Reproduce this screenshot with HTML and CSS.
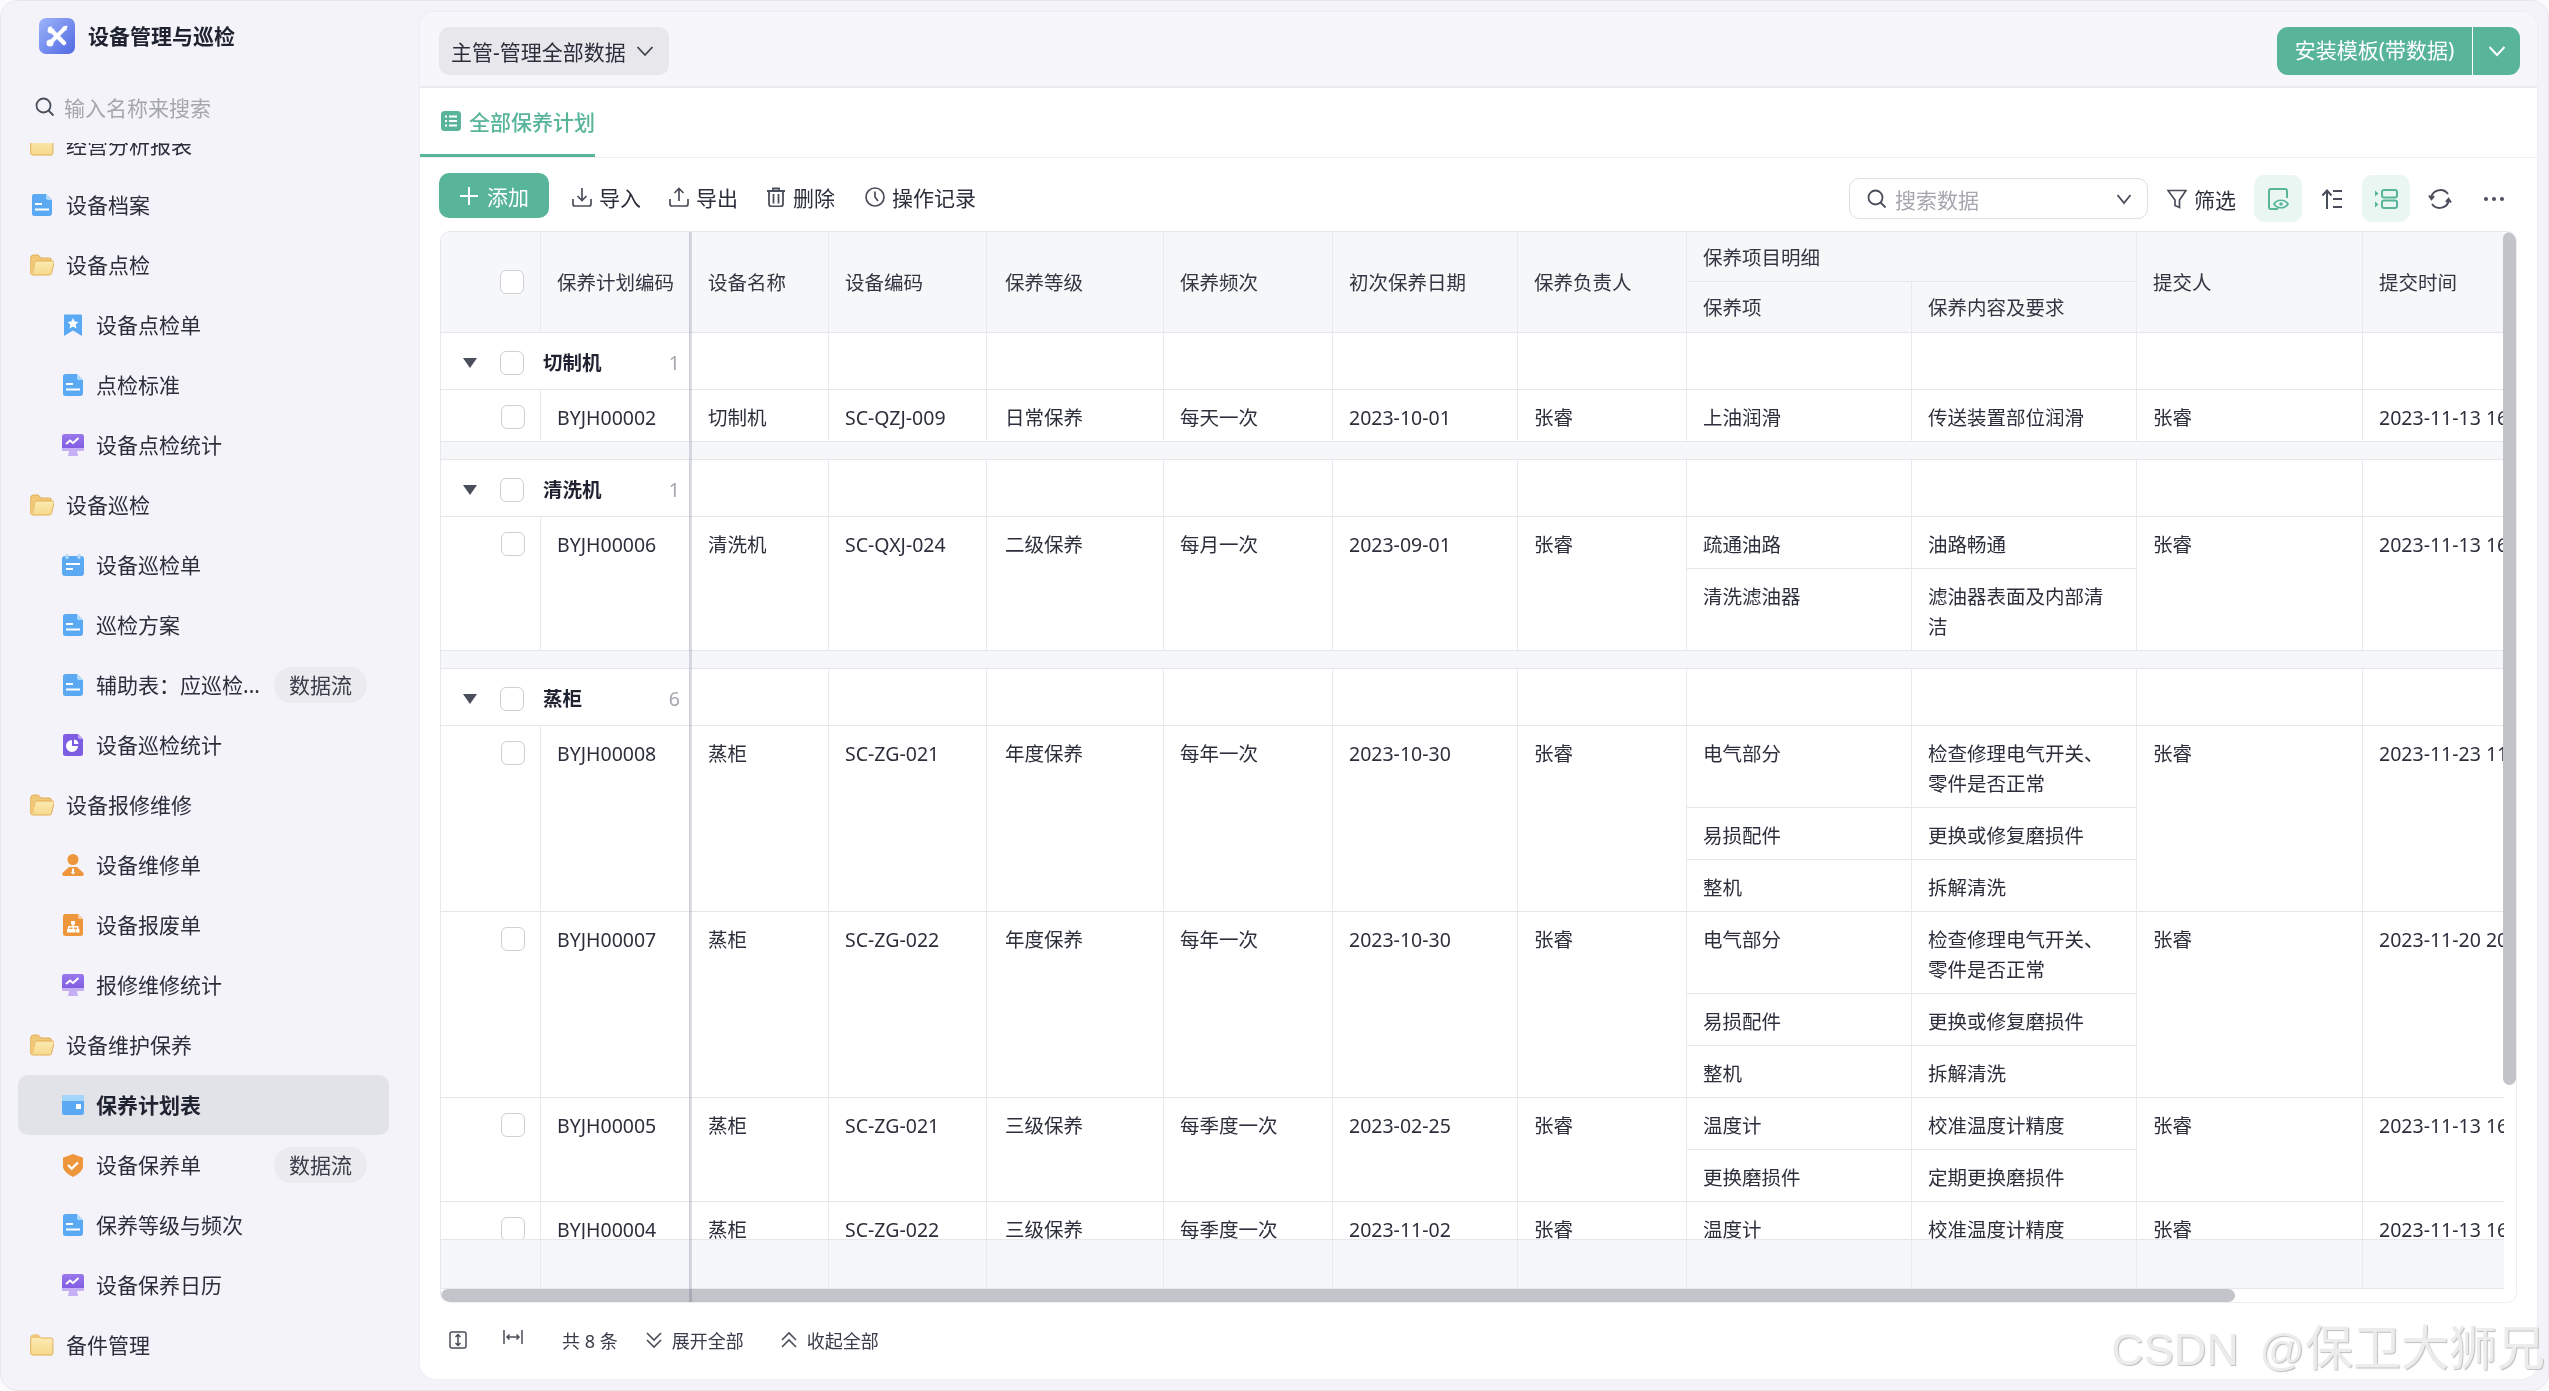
FILE: index.html
```html
<!DOCTYPE html>
<html lang="zh-CN">
<head>
<meta charset="utf-8">
<title>设备管理与巡检</title>
<link rel="stylesheet" href="styles.css">
</head>
<body>
<svg class="defs" width="0" height="0" aria-hidden="true">
  <defs>
    <linearGradient id="gLogo" x1="0" y1="0" x2="1" y2="1"><stop offset="0" stop-color="#9db4fa"/><stop offset="1" stop-color="#5069e2"/></linearGradient>
    <linearGradient id="gFold" x1="0" y1="0" x2="0" y2="1"><stop offset="0" stop-color="#fdeeb9"/><stop offset="1" stop-color="#f6d98c"/></linearGradient>
    <linearGradient id="gPurple" x1="0" y1="0" x2="0" y2="1"><stop offset="0" stop-color="#9a78ec"/><stop offset="1" stop-color="#7b58e0"/></linearGradient>
    <symbol id="i-doc" viewBox="0 0 24 24"><path d="M4.5 1H16l6 6v13a3 3 0 0 1-3 3H4.500a2.500 2.500 0 0 1-2.500-2.500v-17A2.500 2.500 0 0 1 4.500 1z" fill="#5ba9f3"/><path d="M16 1l6 6h-4a2 2 0 0 1-2-2z" fill="#b5dbfb"/><rect x="5" y="10" width="7" height="2" fill="#fff"/><rect x="5" y="15.500" width="14" height="2" fill="#fff"/></symbol>
    <symbol id="i-open" viewBox="0 0 24 24"><path d="M.7 5a3 3 0 0 1 3-3h4.600l2.600 3h8.400a2 2 0 0 1 2 2v2H.7z" fill="#f1c878" stroke="#e3ae57"/><path d="M.7 5v15a2 2 0 0 0 2 2h16.800a2 2 0 0 0 2-1.500L24 10a1.500 1.500 0 0 0-1.500-2H7a2 2 0 0 0-2 1.500L2.500 20" fill="url(#gFold)" stroke="#e3ae57"/><path d="M.7 5v15a2 2 0 0 0 1.800 2L5 10a2 2 0 0 1 2-2V5z" fill="#f1c878"/></symbol>
    <symbol id="i-closed" viewBox="0 0 24 24"><path d="M.7 5a3 3 0 0 1 3-3h4.600l2.600 3h10a2 2 0 0 1 2 2v13a2 2 0 0 1-2 2H2.700a2 2 0 0 1-2-2z" fill="url(#gFold)" stroke="#e3ae57"/><path d="M1 5a3 3 0 0 1 3-3h4.200l2.600 3z" fill="#f1c878"/></symbol>
    <symbol id="i-mark" viewBox="0 0 24 24"><path d="M4 1.500h16a1 1 0 0 1 1 1V23l-9-5.500L3 23V2.500a1 1 0 0 1 1-1z" fill="#5ba9f3"/><path d="M12 5l1.700 3.500 3.800.5-2.800 2.600.7 3.800-3.400-1.800-3.400 1.800.7-3.800L6.500 9l3.800-.5z" fill="#fff"/></symbol>
    <symbol id="i-mon" viewBox="0 0 24 24"><rect x="1" y="1" width="22" height="17" rx="2.500" fill="url(#gPurple)"/><path d="M1 15h22v1a2 2 0 0 1-2 2H3a2 2 0 0 1-2-2z" fill="#c5b0f6"/><path d="M8 18h8l1 5H7z" fill="#c5b0f6"/><path d="M5 11l4-3.500 3 2.500 5.500-5" fill="none" stroke="#fff" stroke-width="2"/></symbol>
    <symbol id="i-cal" viewBox="0 0 24 24"><rect x="1" y="3" width="22" height="20" rx="3" fill="#5ba9f3"/><rect x="4.500" y="1" width="3" height="5" rx="1" fill="#b5dbfb"/><rect x="16.500" y="1" width="3" height="5" rx="1" fill="#b5dbfb"/><rect x="5" y="10" width="14" height="2" fill="#fff"/><rect x="5" y="15" width="7" height="2" fill="#fff"/></symbol>
    <symbol id="i-pie" viewBox="0 0 24 24"><path d="M4.500 1H17l5 5v14.500a2.500 2.500 0 0 1-2.500 2.500h-15A2.500 2.500 0 0 1 2 20.500v-17A2.500 2.500 0 0 1 4.500 1z" fill="#7d5ee3"/><path d="M17 1l5 5h-3a2 2 0 0 1-2-2z" fill="#bfa9f6"/><path d="M11 7a6 6 0 1 0 6 6h-6z" fill="#fff"/><path d="M13 6.500a5 5 0 0 1 4.500 4.500H13z" fill="#fff"/></symbol>
    <symbol id="i-user" viewBox="0 0 24 24"><circle cx="12" cy="6.500" r="5.500" fill="#ee963b"/><path d="M8 14h8l6 5.500c1 1 1 3.500-1 3.500H3c-2 0-2-2.500-1-3.500z" fill="#ee963b"/><path d="M11 15.500h2v3l1 1-2 2-2-2 1-1z" fill="#fff"/></symbol>
    <symbol id="i-org" viewBox="0 0 24 24"><path d="M4.500 1H17l5 5v14.500a2.500 2.500 0 0 1-2.500 2.500h-15A2.500 2.500 0 0 1 2 20.500v-17A2.500 2.500 0 0 1 4.500 1z" fill="#ee963b"/><path d="M17 1l5 5h-3a2 2 0 0 1-2-2z" fill="#f8cf9c"/><path d="M10 8h4v3.500h-1.200v1.500h4.700v3h1v3.500h-4V16h1.500v-1.500h-3V16H14v3.500h-4V16h1.500v-1.500h-3V16H10v3.500H6V16h1v-3h4.200v-1.500H10z" fill="#fff"/></symbol>
    <symbol id="i-card" viewBox="0 0 24 24"><rect x="1" y="2" width="22" height="20" rx="2.500" fill="#5ba9f3"/><path d="M1 8V4.500A2.500 2.500 0 0 1 3.500 2h17A2.500 2.500 0 0 1 23 4.500V8z" fill="#a4d5fa"/><rect x="15" y="11" width="5" height="5" fill="#fff"/></symbol>
    <symbol id="i-shield" viewBox="0 0 24 24"><path d="M12 1l9.500 3.500a1 1 0 0 1 .5.800v8c0 5-6 8.700-10 10.700-4-2-10-5.700-10-10.700v-8a1 1 0 0 1 .5-.8z" fill="#ee963b"/><path d="M7 12l3.700 3.500L17 9.500" fill="none" stroke="#fff" stroke-width="2.400"/></symbol>
  </defs>
</svg>
<div class="shell">
  <aside class="side">
    <div class="brand">
      <span class="logo"><svg viewBox="0 0 36 36" width="36" height="36"><rect width="36" height="36" rx="7" fill="url(#gLogo)"/><path d="M11 11l14 14" stroke="#fff" stroke-width="4.500" stroke-linecap="round"/><path d="M25 11L11 25" stroke="#fff" stroke-width="4" stroke-linecap="round"/><path d="M8.500 13.500a5 5 0 0 1 5-5l-2.500 3 1.500 1.500 3-2.500a5 5 0 0 1-5 5z" fill="#fff"/><path d="M23 9l4.500-1.500 1 1L27 13z" fill="#fff"/><circle cx="11" cy="25" r="3.500" fill="#fff"/></svg></span>
      <span class="brand-name">设备管理与巡检</span>
    </div>
    <div class="side-search">
      <svg class="ic20" viewBox="0 0 20 20" fill="none" stroke="#4a4e5a" stroke-width="1.800"><circle cx="8.500" cy="8.500" r="7"/><path d="M13.500 13.500l5 5"/></svg>
      <span>输入名称来搜索</span>
    </div>
    <nav class="nav">
      <ul class="nav-list">
        <li class="item"><svg class="ni"><use href="#i-closed"/></svg><span class="name">经营分析报表</span></li>
        <li class="item"><svg class="ni"><use href="#i-doc"/></svg><span class="name">设备档案</span></li>
        <li class="item"><svg class="ni"><use href="#i-open"/></svg><span class="name">设备点检</span></li>
        <li class="item sub"><svg class="ni"><use href="#i-mark"/></svg><span class="name">设备点检单</span></li>
        <li class="item sub"><svg class="ni"><use href="#i-doc"/></svg><span class="name">点检标准</span></li>
        <li class="item sub"><svg class="ni"><use href="#i-mon"/></svg><span class="name">设备点检统计</span></li>
        <li class="item"><svg class="ni"><use href="#i-open"/></svg><span class="name">设备巡检</span></li>
        <li class="item sub"><svg class="ni"><use href="#i-cal"/></svg><span class="name">设备巡检单</span></li>
        <li class="item sub"><svg class="ni"><use href="#i-doc"/></svg><span class="name">巡检方案</span></li>
        <li class="item sub"><svg class="ni"><use href="#i-doc"/></svg><span class="name">辅助表：应巡检...</span><span class="badge">数据流</span></li>
        <li class="item sub"><svg class="ni"><use href="#i-pie"/></svg><span class="name">设备巡检统计</span></li>
        <li class="item"><svg class="ni"><use href="#i-open"/></svg><span class="name">设备报修维修</span></li>
        <li class="item sub"><svg class="ni"><use href="#i-user"/></svg><span class="name">设备维修单</span></li>
        <li class="item sub"><svg class="ni"><use href="#i-org"/></svg><span class="name">设备报废单</span></li>
        <li class="item sub"><svg class="ni"><use href="#i-mon"/></svg><span class="name">报修维修统计</span></li>
        <li class="item"><svg class="ni"><use href="#i-open"/></svg><span class="name">设备维护保养</span></li>
        <li class="item sub active"><svg class="ni"><use href="#i-card"/></svg><span class="name">保养计划表</span></li>
        <li class="item sub"><svg class="ni"><use href="#i-shield"/></svg><span class="name">设备保养单</span><span class="badge">数据流</span></li>
        <li class="item sub"><svg class="ni"><use href="#i-doc"/></svg><span class="name">保养等级与频次</span></li>
        <li class="item sub"><svg class="ni"><use href="#i-mon"/></svg><span class="name">设备保养日历</span></li>
        <li class="item"><svg class="ni"><use href="#i-closed"/></svg><span class="name">备件管理</span></li>
      </ul>
    </nav>
  </aside>
  <main class="main">
    <header class="topbar">
      <div class="scope"><span>主管-管理全部数据</span><svg class="chev" viewBox="0 0 18 12" fill="none" stroke="#3f4350" stroke-width="1.800"><path d="M1.500 2l7.500 8 7.500-8"/></svg></div>
      <div class="install"><span class="install-main">安装模板(带数据)</span><span class="install-more"><svg class="chev" viewBox="0 0 18 12" fill="none" stroke="#fff" stroke-width="2"><path d="M1.500 2l7.500 8 7.500-8"/></svg></span></div>
    </header>
    <div class="tabs">
      <div class="tab">
        <svg class="ic20" viewBox="0 0 20 20"><rect width="20" height="20" rx="3.500" fill="#58b599"/><path d="M4 5.500h2M8 5.500h8M4 10h2M8 10h8M4 14.500h2M8 14.500h8" stroke="#fff" stroke-width="1.800"/></svg>
        <span>全部保养计划</span>
      </div>
    </div>
    <div class="toolbar">
      <button class="add"><svg class="ic20" viewBox="0 0 20 20" stroke="#fff" stroke-width="2"><path d="M10 1v18M1 10h18"/></svg><span>添加</span></button>
      <div class="tool"><svg class="ic20" viewBox="0 0 20 20" fill="none" stroke="#4a4e5a" stroke-width="1.700"><path d="M10 1v12M5.500 9l4.500 4.500L14.500 9M1 12v5a2 2 0 0 0 2 2h14a2 2 0 0 0 2-2v-5"/></svg><span>导入</span></div>
      <div class="tool"><svg class="ic20" viewBox="0 0 20 20" fill="none" stroke="#4a4e5a" stroke-width="1.700"><path d="M10 14V2M5.500 6L10 1.500 14.500 6M1 12v5a2 2 0 0 0 2 2h14a2 2 0 0 0 2-2v-5"/></svg><span>导出</span></div>
      <div class="tool del"><svg class="ic20" viewBox="0 0 20 20" fill="none" stroke="#4a4e5a" stroke-width="1.800"><path d="M1 4h18M7 4V1.500h6V4M3 4v13a2.500 2.500 0 0 0 2.500 2.500h9A2.500 2.500 0 0 0 17 17V4M7.500 7v9.500M12.500 7v9.500"/></svg><span>删除</span></div>
      <div class="tool"><svg class="ic20" viewBox="0 0 20 20" fill="none" stroke="#4a4e5a" stroke-width="1.700"><circle cx="10" cy="10" r="9"/><path d="M10 4.500V10l3 4"/></svg><span>操作记录</span></div>
      <div class="tools-right">
        <div class="data-search">
          <svg class="ic20" viewBox="0 0 20 20" fill="none" stroke="#4a4e5a" stroke-width="1.800"><circle cx="8.500" cy="8.500" r="7"/><path d="M13.500 13.500l5 5"/></svg>
          <span class="ph">搜索数据</span>
          <svg class="chev" viewBox="0 0 18 12" fill="none" stroke="#4a4e5a" stroke-width="1.800"><path d="M2.500 2l6.500 8 6.500-8"/></svg>
        </div>
        <div class="tool filter"><svg class="ic20" viewBox="0 0 20 20" fill="none" stroke="#4a4e5a" stroke-width="1.700"><path d="M1 1.500h18L12.500 11v7.500l-4.500-2V11z"/></svg><span>筛选</span></div>
        <div class="icon-btn on"><svg class="ic24" viewBox="0 0 24 24" fill="none" stroke="#58b599" stroke-width="2"><path d="M21 11V4a2 2 0 0 0-2-2H5a2 2 0 0 0-2 2v16a2 2 0 0 0 2 2h7"/><path d="M8 17c3-5 11-5 14 0-3 5-11 5-14 0z" fill="#e9f6f2" stroke-width="1.700"/><circle cx="15" cy="17" r="1.800" fill="#58b599" stroke="none"/></svg></div>
        <div class="icon-btn"><svg class="ic24" viewBox="0 0 24 24" fill="none" stroke="#4a4e5a" stroke-width="2"><path d="M7 22V4M2.500 8.500L7 3.500l4.500 5M13 4h9M13 12h9M13 20h9"/></svg></div>
        <div class="icon-btn on"><svg class="ic24" viewBox="0 0 24 24" fill="none" stroke="#58b599" stroke-width="2"><rect x="8" y="3" width="15" height="7.500" rx="2"/><rect x="8" y="13.500" width="15" height="7.500" rx="2"/><path d="M1 3.500l3.500 3L1 9.500zM1 14.500l3.500 3L1 20.500z" fill="#58b599" stroke="none"/></svg></div>
        <div class="icon-btn"><svg class="ic24" viewBox="0 0 24 24" fill="none" stroke="#4a4e5a" stroke-width="2"><path d="M3 11a9.500 9.500 0 0 1 17-4M21 13a9.500 9.500 0 0 1-17 4"/><path d="M1 8.500l2.500 3.500L6 9M23 15.500L20.500 12 18 15" /></svg></div>
        <div class="icon-btn"><svg class="ic24" viewBox="0 0 24 24" fill="#4a4e5a"><circle cx="4" cy="12" r="2"/><circle cx="12" cy="12" r="2"/><circle cx="20" cy="12" r="2"/></svg></div>
      </div>
    </div>
    <section class="grid">
      <div class="grid-scroll">
        <table class="tbl">
          <colgroup><col class="w1"><col class="w2"><col class="w3"><col class="w4"><col class="w5"><col class="w6"><col class="w7"><col class="w8"><col class="w9"><col class="w10"><col class="w11"><col class="w12"></colgroup>
          <thead>
            <tr class="h1">
              <th rowspan="2" class="thcheck"><span class="cb"></span></th>
              <th rowspan="2">保养计划编码</th><th rowspan="2" class="pl">设备名称</th><th rowspan="2">设备编码</th><th rowspan="2" class="pl">保养等级</th><th rowspan="2">保养频次</th><th rowspan="2">初次保养日期</th><th rowspan="2">保养负责人</th>
              <th colspan="2">保养项目明细</th>
              <th rowspan="2">提交人</th><th rowspan="2">提交时间</th>
            </tr>
            <tr class="h2"><th>保养项</th><th>保养内容及要求</th></tr>
          </thead>
          <tbody>
            <tr class="group"><td colspan="2"><div class="ghead"><span class="tri"></span><span class="cb"></span><b>切制机</b><span class="count">1</span></div></td><td></td><td></td><td></td><td></td><td></td><td></td><td></td><td></td><td></td><td></td></tr>
            <tr><td class="tdcheck"><span class="cb"></span></td><td>BYJH00002</td><td class="pl">切制机</td><td>SC-QZJ-009</td><td class="pl">日常保养</td><td>每天一次</td><td>2023-10-01</td><td>张睿</td><td>上油润滑</td><td>传送装置部位润滑</td><td>张睿</td><td>2023-11-13 16:25:41</td></tr>
            <tr class="gap"><td colspan="12"></td></tr>

            <tr class="group"><td colspan="2"><div class="ghead"><span class="tri"></span><span class="cb"></span><b>清洗机</b><span class="count">1</span></div></td><td></td><td></td><td></td><td></td><td></td><td></td><td></td><td></td><td></td><td></td></tr>
            <tr><td rowspan="2" class="tdcheck"><span class="cb"></span></td><td rowspan="2">BYJH00006</td><td rowspan="2" class="pl">清洗机</td><td rowspan="2">SC-QXJ-024</td><td rowspan="2" class="pl">二级保养</td><td rowspan="2">每月一次</td><td rowspan="2">2023-09-01</td><td rowspan="2">张睿</td><td>疏通油路</td><td>油路畅通</td><td rowspan="2">张睿</td><td rowspan="2">2023-11-13 16:25:41</td></tr>
            <tr><td>清洗滤油器</td><td>滤油器表面及内部清洁</td></tr>
            <tr class="gap"><td colspan="12"></td></tr>

            <tr class="group"><td colspan="2"><div class="ghead"><span class="tri"></span><span class="cb"></span><b>蒸柜</b><span class="count">6</span></div></td><td></td><td></td><td></td><td></td><td></td><td></td><td></td><td></td><td></td><td></td></tr>
            <tr><td rowspan="3" class="tdcheck"><span class="cb"></span></td><td rowspan="3">BYJH00008</td><td rowspan="3" class="pl">蒸柜</td><td rowspan="3">SC-ZG-021</td><td rowspan="3" class="pl">年度保养</td><td rowspan="3">每年一次</td><td rowspan="3">2023-10-30</td><td rowspan="3">张睿</td><td>电气部分</td><td>检查修理电气开关、零件是否正常</td><td rowspan="3">张睿</td><td rowspan="3">2023-11-23 11:08:26</td></tr>
            <tr><td>易损配件</td><td>更换或修复磨损件</td></tr>
            <tr><td>整机</td><td>拆解清洗</td></tr>
            <tr><td rowspan="3" class="tdcheck"><span class="cb"></span></td><td rowspan="3">BYJH00007</td><td rowspan="3" class="pl">蒸柜</td><td rowspan="3">SC-ZG-022</td><td rowspan="3" class="pl">年度保养</td><td rowspan="3">每年一次</td><td rowspan="3">2023-10-30</td><td rowspan="3">张睿</td><td>电气部分</td><td>检查修理电气开关、零件是否正常</td><td rowspan="3">张睿</td><td rowspan="3">2023-11-20 20:14:37</td></tr>
            <tr><td>易损配件</td><td>更换或修复磨损件</td></tr>
            <tr><td>整机</td><td>拆解清洗</td></tr>
            <tr><td rowspan="2" class="tdcheck"><span class="cb"></span></td><td rowspan="2">BYJH00005</td><td rowspan="2" class="pl">蒸柜</td><td rowspan="2">SC-ZG-021</td><td rowspan="2" class="pl">三级保养</td><td rowspan="2">每季度一次</td><td rowspan="2">2023-02-25</td><td rowspan="2">张睿</td><td>温度计</td><td>校准温度计精度</td><td rowspan="2">张睿</td><td rowspan="2">2023-11-13 16:25:41</td></tr>
            <tr><td>更换磨损件</td><td>定期更换磨损件</td></tr>
            <tr><td class="tdcheck"><span class="cb"></span></td><td>BYJH00004</td><td class="pl">蒸柜</td><td>SC-ZG-022</td><td class="pl">三级保养</td><td>每季度一次</td><td>2023-11-02</td><td>张睿</td><td>温度计</td><td>校准温度计精度</td><td>张睿</td><td>2023-11-13 16:25:41</td></tr>
          </tbody>
        </table>
      </div>
      <div class="summary">
        <span class="w1"></span><span class="w2"></span><span class="w3"></span><span class="w4"></span><span class="w5"></span><span class="w6"></span><span class="w7"></span><span class="w8"></span><span class="w9"></span><span class="w10"></span><span class="w11"></span><span class="w12"></span>
      </div>
      <div class="hbar"><div class="hthumb"></div></div>
      <div class="vthumb"></div>
      <div class="freeze"></div>
    </section>
    <footer class="foot">
      <svg class="ic18 f1" viewBox="0 0 18 18" fill="none" stroke="#4a4e5a" stroke-width="1.500"><rect x="1" y="1" width="16" height="16" rx="2"/><path d="M9 3.500v11M6.500 6L9 3.500 11.500 6M6.500 12L9 14.500l2.500-2.500"/></svg>
      <svg class="ic18 f2" viewBox="0 0 20 18" fill="none" stroke="#4a4e5a" stroke-width="1.500"><path d="M1 1v14M19 1v14M4 8h12M6.500 5.500L4 8l2.500 2.500M13.500 5.500L16 8l-2.500 2.500"/></svg>
      <span class="total">共 8 条</span>
      <span class="fa"><svg class="ic18" viewBox="0 0 18 18" fill="none" stroke="#4a4e5a" stroke-width="1.600"><path d="M2 2l7 7 7-7M2 9l7 7 7-7"/></svg>展开全部</span>
      <span class="fa"><svg class="ic18" viewBox="0 0 18 18" fill="none" stroke="#4a4e5a" stroke-width="1.600"><path d="M2 9l7-7 7 7M2 16l7-7 7 7"/></svg>收起全部</span>
    </footer>
  </main>
  <div class="watermark">CSDN @<span class="wm-cjk">保卫大狮兄</span></div>
</div>
</body>
</html>
```
FILE: styles.css
```css
* { box-sizing: border-box; }
html, body { margin: 0; padding: 0; width: 2549px; height: 1391px; overflow: hidden; background: #fbfbfd; }
body { font-family: "Noto Sans", "Noto Sans CJK SC", sans-serif; color: #2c2f3b; font-size: 21px; }
.defs { position: absolute; }
ul { list-style: none; margin: 0; padding: 0; }
.shell { position: relative; display: flex; width: 2549px; height: 1391px; background: #f3f3f9; border-radius: 18px; border: 1px solid #e6e6ec; overflow: hidden; }
.ic20 { width: 20px; height: 20px; flex: none; }
.ic24 { width: 24px; height: 24px; flex: none; }
.ic18 { width: 18px; height: 18px; flex: none; }
.chev { width: 18px; height: 12px; flex: none; }

/* sidebar */
.side { width: 419px; flex: none; display: flex; flex-direction: column; height: 100%; }
.brand { display: flex; align-items: center; gap: 13px; height: 53px; padding: 17px 0 0 38px; flex: none; }
.logo { width: 36px; height: 36px; display: block; flex: none; }
.brand-name { font-weight: 700; font-size: 21px; color: #1f2230; line-height: 36px; }
.side-search { display: flex; align-items: center; gap: 9px; height: 36px; padding-left: 34px; margin-top: 35px; color: #a5a6ae; flex: none; }
.nav { flex: 1; min-height: 0; overflow: hidden; margin-top: 18px; }
.nav-list { margin-top: -28px; }
.item { display: flex; align-items: center; height: 60px; width: 371px; margin-left: 17px; padding: 0 22px 0 12px; gap: 12px; border-radius: 10px; }
.item.sub { padding-left: 43px; gap: 11px; }
.ni { width: 24px; height: 24px; flex: none; }
.name { flex: 1; min-width: 0; white-space: nowrap; line-height: 30px; }
.item.active { background: #e2e3e8; }
.item.active .name { font-weight: 700; color: #1f2230; }
.badge { flex: none; width: 93px; height: 36px; line-height: 36px; text-align: center; border-radius: 18px; background: #eaeaef; margin-left: 12px; color: #3a3d49; }

/* main */
.main { width: 2117px; height: 1367px; margin-top: 11px; flex: none; background: #fff; border-radius: 15px; display: flex; flex-direction: column; overflow: hidden; box-shadow: 0 0 3px rgba(40,40,80,.06); }
.topbar { height: 76px; flex: none; display: flex; align-items: center; justify-content: space-between; padding: 4px 17px 0 19px; background: #f6f6fb; border-bottom: 2px solid #ebebf0; }
.scope { display: flex; align-items: center; gap: 10px; height: 48px; padding: 0 15px 0 12px; background: #e7e7ec; border-radius: 10px; color: #2c2f3b; }
.install { display: flex; height: 48px; width: 243px; border-radius: 11px; background: #58b599; color: #fff; overflow: hidden; }
.install-main { width: 196px; border-right: 1px solid #fff; text-align: center; line-height: 46px; }
.install-more { flex: 1; display: flex; align-items: center; justify-content: center; }
.tabs { height: 70px; flex: none; display: flex; align-items: flex-end; border-bottom: 1px solid #eeeef1; }
.tab { width: 175px; height: 69px; display: flex; align-items: center; gap: 8px; padding: 0 0 0 21px; color: #58b599; font-weight: 500; border-bottom: 3px solid #58b599; white-space: nowrap; }
.toolbar { height: 73px; flex: none; display: flex; align-items: center; padding: 8px 19px 0; }
.add { align-self: flex-start; margin: 7px 23px 0 0; height: 45px; width: 110px; border: 0; border-radius: 10px; background: #58b599; color: #fff; font: inherit; display: flex; align-items: center; justify-content: center; gap: 8px; padding: 0; }
.tool { display: flex; align-items: center; gap: 7px; margin: 0 28px 3px 0; white-space: nowrap; }
.tool.del { margin-right: 30px; }
.tools-right { margin-left: auto; display: flex; align-items: center; gap: 6px; }
.data-search { width: 299px; height: 41px; border: 1.5px solid #dedfe5; border-radius: 10px; display: flex; align-items: center; gap: 8px; padding: 0 14px 0 17px; margin-right: 13px; color: #a5a6ae; }
.ph { flex: 1; }
.tool.filter { margin: 0 12px 0 0; }
.icon-btn { width: 48px; height: 47px; border-radius: 10px; display: flex; align-items: center; justify-content: center; }
.icon-btn.on { background: #e9f6f2; }

/* grid */
.grid { position: relative; height: 1072px; flex: none; margin: 0 20px; border: 1px solid #e7e8ec; border-right-color: #eeeef1; border-bottom-color: #eeeef1; border-radius: 10px; overflow: hidden; display: flex; flex-direction: column; font-size: 19.5px; }
.grid-scroll { height: 1007px; flex: none; margin-right: 12px; overflow: hidden; }
.tbl { table-layout: fixed; border-collapse: separate; border-spacing: 0; width: 2222px; }
.w1 { width: 100px; } .w2 { width: 149px; } .w3 { width: 139px; } .w4 { width: 158px; } .w5 { width: 177px; } .w6 { width: 169px; } .w7 { width: 185px; } .w8 { width: 169px; } .w9 { width: 225px; } .w10 { width: 225px; } .w11 { width: 226px; } .w12 { width: 300px; }
.tbl th, .tbl td { border-right: 1px solid #e9eaee; border-bottom: 1px solid #e6e7eb; padding: 13px 15px 8px 16px; line-height: 30px; text-align: left; font-weight: 400; vertical-align: top; }
.tbl th { background: #f6f7f9; padding: 2px 15px 0 16px; vertical-align: middle; color: #333642; }
.tbl .pl { padding-left: 18px; }
.h1 { height: 50px; }
.h2 { height: 51px; }
.tbl .thcheck { padding: 0 0 0 59px; }
.tbl .tdcheck { padding: 15px 0 0 60px; }
.cb { display: block; width: 24px; height: 24px; border: 1.5px solid #cfd0d6; border-radius: 6px; background: #fff; flex: none; }
.tbl .group td { padding: 0; height: 57px; }
.ghead { display: flex; align-items: center; height: 56px; padding: 3px 0 0 22px; }
.tri { width: 0; height: 0; border-left: 7px solid transparent; border-right: 7px solid transparent; border-top: 10px solid #4a4e5a; margin-right: 23px; }
.ghead b { margin-left: 19px; font-weight: 700; flex: 1; color: #1f2230; }
.count { color: #a5a6ae; margin-right: 9px; }
.tbl .gap td { padding: 0; height: 18px; background: #f6f7f9; line-height: 0; }
.summary { display: flex; height: 50px; flex: none; margin-right: 12px; overflow: hidden; background: #f6f7f9; border-top: 1px solid #e6e7eb; border-bottom: 1px solid #e6e7eb; }
.summary span { display: block; flex: none; height: 100%; border-right: 1px solid #e9eaee; }
.hbar { height: 13px; flex: none; }
.hthumb { width: 1794px; height: 13px; border-radius: 7px; background: #c3c4ca; }
.vthumb { position: absolute; right: 0; top: 0; width: 13px; height: 853px; border-radius: 7px; background: #c3c4ca; }
.freeze { position: absolute; left: 248px; top: 0; bottom: 0; width: 3px; background: #dcdde6; mix-blend-mode: multiply; }

/* footer */
.foot { flex: 1; display: flex; align-items: center; padding: 0 0 2px 29px; font-size: 18px; color: #3a3d49; }
.f1 { margin-right: 36px; }
.f2 { width: 20px; margin-right: 39px; margin-top: -4px; }
.total { margin-right: 27px; }
.fa { display: flex; align-items: center; gap: 9px; margin-right: 36px; }
.watermark { position: absolute; right: 3px; bottom: 12px; font-family: "Liberation Sans", "Noto Sans CJK SC", sans-serif; font-size: 45px; line-height: 56px; color: #ececec; text-shadow: 1px 1px 1px #bdbdbd; white-space: nowrap; word-spacing: 8px; }
.wm-cjk { font-size: 48px; }
```
